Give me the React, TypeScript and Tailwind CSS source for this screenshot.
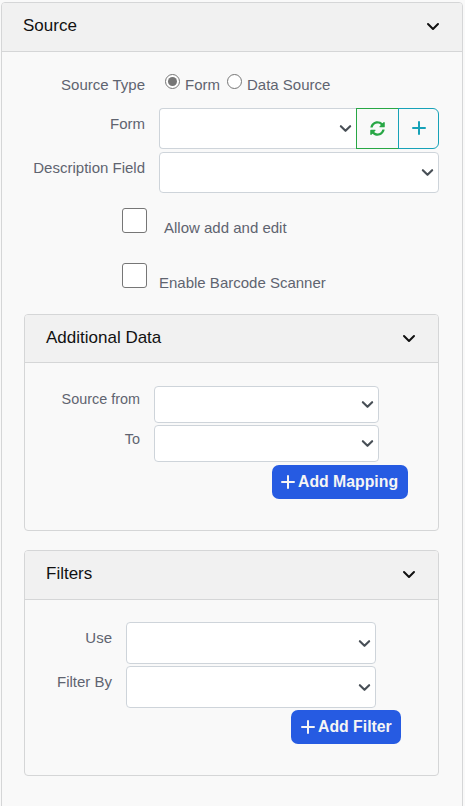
import type { ReactNode } from "react";
import { FaSyncAlt } from "react-icons/fa";

function Chevron({ className }: { className: string }) {
  return (
    <svg viewBox="0 0 14 9" fill="none" stroke="currentColor" strokeWidth="2" strokeLinecap="round" strokeLinejoin="round" className={className}>
      <path d="M2 2l5 5 5-5" />
    </svg>
  );
}

function Plus({ className, size }: { className?: string; size: number }) {
  return (
    <svg viewBox="0 0 14 14" width={size} height={size} fill="none" stroke="currentColor" strokeWidth="2" strokeLinecap="round" className={className}>
      <path d="M7 1v12M1 7h12" />
    </svg>
  );
}

function Select({ className, label }: { className: string; label: string }) {
  return (
    <button type="button" aria-label={label} className={`flex shrink-0 items-center justify-end border border-[#ced4da] bg-white pr-[4px] ${className}`}>
      <Chevron className="h-[9px] w-[13px] text-[#495057] [stroke-width:2.3]" />
    </button>
  );
}

function Header({ title, className, titleClass }: { title: string; className: string; titleClass: string }) {
  return (
    <header className={`flex items-center justify-between border-b border-[#d5d6d7] bg-[#f1f1f1] pl-[21px] pr-[22px] text-[17px] text-[#111] ${className}`}>
      <h2 className={`leading-6 ${titleClass}`}>{title}</h2>
      <Chevron className="-mt-px h-[9px] w-[14px] text-[#111]" />
    </header>
  );
}

function Field({ label, labelClass, className, children }: { label: string; labelClass: string; className: string; children: ReactNode }) {
  return (
    <div className={`flex items-start ${className}`}>
      <label className={`shrink-0 text-right leading-5 ${labelClass}`}>{label}</label>
      {children}
    </div>
  );
}

function Check({ label, className }: { label: string; className: string }) {
  return (
    <label className="flex h-[25px] items-start pl-[120px]">
      <input type="checkbox" className="size-[25px] shrink-0 appearance-none rounded-[3px] border border-[#767676] bg-white" />
      <span className={`leading-5 ${className}`}>{label}</span>
    </label>
  );
}

function AddButton({ label, className }: { label: string; className: string }) {
  return (
    <button type="button" className={`flex h-[34px] items-center justify-start gap-[3px] rounded-[7px] bg-[#265be2] pb-px text-[15.8px] font-bold text-[#f5f5f5] ${className}`}>
      <Plus size={14} />
      <span>{label}</span>
    </button>
  );
}

export default function App() {
  return (
    <main className="h-[806px] overflow-hidden bg-[#f9f9f9] pl-px pr-0.5 pt-0.5 font-['Liberation_Sans',Arial,sans-serif] text-[15px] text-[#5f6470]">
      <section className="h-[820px] overflow-hidden rounded-[4px] border border-[#d5d6d7]">
        <Header title="Source" className="h-[49px]" titleClass="-mt-[3px]" />

        <div className="flex h-[56px] items-start pt-[23px]">
          <span className="w-[143px] text-right leading-5">Source Type</span>
          <label className="ml-5 flex items-start gap-[5px]">
            <span className="-mt-px flex size-[15px] items-center justify-center rounded-full border border-[#767676] bg-white">
              <span className="size-[9px] rounded-full bg-[#767676]" />
            </span>
            <span className="leading-5">Form</span>
          </label>
          <label className="ml-[7px] flex items-start gap-[5px]">
            <span className="-mt-px size-[15px] rounded-full border border-[#767676] bg-white" />
            <span className="leading-5">Data Source</span>
          </label>
        </div>

        <Field label="Form" labelClass="w-[143px] pt-1.5" className="h-[44px]">
          <Select label="Form" className="ml-3.5 h-[41px] w-[197px] rounded-l-[4px] border-r-0" />
          <button type="button" aria-label="Refresh" className="flex h-[41px] w-[43px] items-center justify-center border border-[#28a745] text-[#28a745]">
            <FaSyncAlt size={15} />
          </button>
          <button type="button" aria-label="Add" className="-ml-px flex h-[41px] w-[41px] items-center justify-center rounded-r-[6px] border border-[#17a2b8] pb-[2px] text-[#17a2b8]">
            <Plus size={14} />
          </button>
        </Field>
        <Field label="Description Field" labelClass="w-[143px] pt-1.5" className="h-[56px]">
          <Select label="Description Field" className="ml-3.5 h-[41px] w-[280px] rounded-[4px]" />
        </Field>

        <div className="flex h-[106px] flex-col gap-[30px]">
          <Check label="Allow add and edit" className="ml-[17px] mt-[10px]" />
          <Check label="Enable Barcode Scanner" className="ml-3 mt-[10px]" />
        </div>

        <section className="ml-[22px] h-[217px] w-[415px] overflow-hidden rounded-[4px] border border-[#d5d6d7]">
          <Header title="Additional Data" className="h-[48px]" titleClass="-mt-px" />
          <div className="pt-[23px]">
            <Field label="Source from" labelClass="w-[115px] pt-[3px] text-[14.4px]" className="h-[39px]">
              <Select label="Source from" className="ml-3.5 h-[37px] w-[225px] rounded-[4px]" />
            </Field>
            <Field label="To" labelClass="w-[115px] pt-1 text-[14.4px]" className="h-[40px]">
              <Select label="To" className="ml-3.5 h-[37px] w-[225px] rounded-[4px]" />
            </Field>
            <AddButton label="Add Mapping" className="ml-[247px] w-[136px] pl-[9px]" />
          </div>
        </section>

        <section className="ml-[22px] mt-[19px] h-[226px] w-[415px] overflow-hidden rounded-[4px] border border-[#d5d6d7]">
          <Header title="Filters" className="h-[49px]" titleClass="-mt-[3px]" />
          <div className="pt-[22px]">
            <Field label="Use" labelClass="w-[87px] pt-1.5" className="h-[44px]">
              <Select label="Use" className="ml-3.5 h-[42px] w-[250px] rounded-[4px]" />
            </Field>
            <Field label="Filter By" labelClass="w-[87px] pt-1.5" className="h-[44px]">
              <Select label="Filter By" className="ml-3.5 h-[42px] w-[250px] rounded-[4px]" />
            </Field>
            <AddButton label="Add Filter" className="ml-[266px] w-[110px] pl-[10px]" />
          </div>
        </section>
      </section>
    </main>
  );
}
